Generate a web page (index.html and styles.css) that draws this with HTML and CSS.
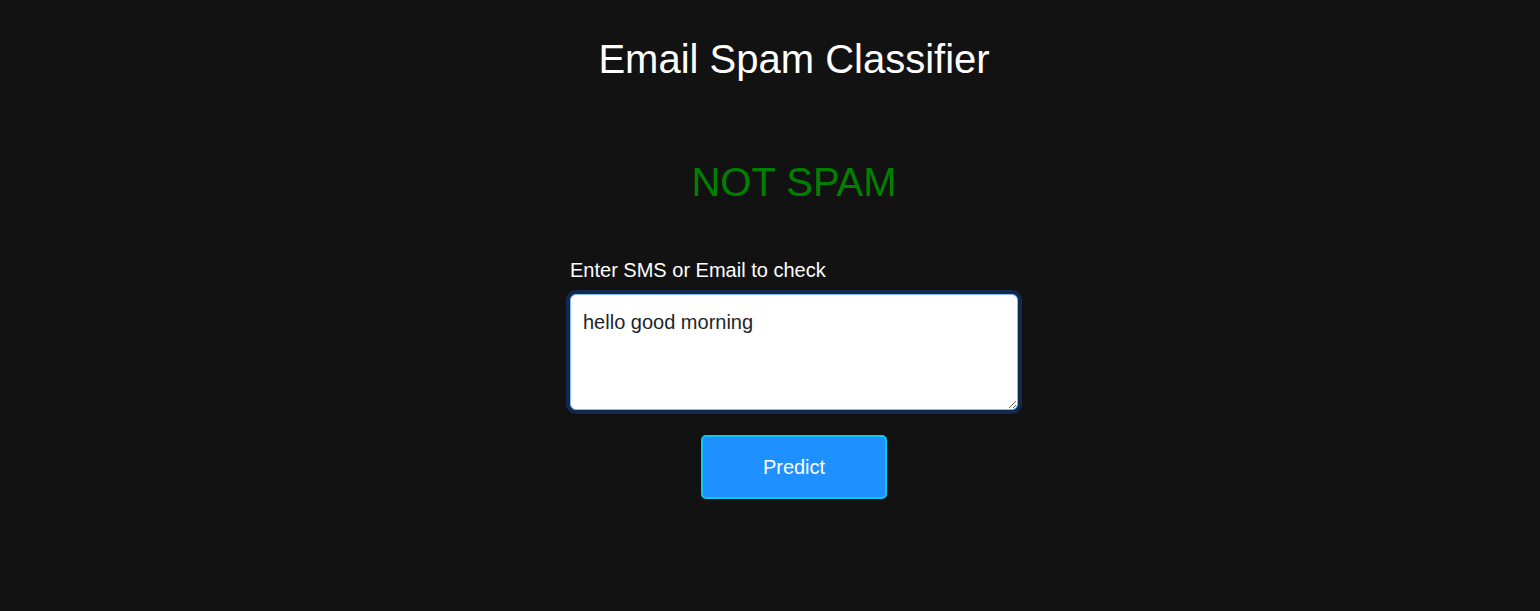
FILE: index.html
```html
<!DOCTYPE html>
<html lang="en">
<head>
<meta charset="utf-8">
<title>Email Spam Classifier</title>
<link rel="stylesheet" href="styles.css">
</head>
<body>
<main class="page">
  <h1 class="title">Email Spam Classifier</h1>
  <h2 class="result">NOT SPAM</h2>
  <form class="form">
    <label class="label" for="msg">Enter SMS or Email to check</label>
    <textarea id="msg" class="input" rows="3">hello good morning</textarea>
    <button type="button" class="btn">Predict</button>
  </form>
</main>
</body>
</html>
```
FILE: styles.css
```css
html, body {
  margin: 0;
  padding: 0;
  background: #121212;
}
body {
  font-family: "Liberation Sans", Arial, sans-serif;
  color: #ffffff;
}
.page {
  display: flex;
  flex-direction: column;
  align-items: center;
  padding-left: 48px;
}
.title {
  margin: 35px 0 0;
  font-size: 40px;
  line-height: 48px;
  font-weight: normal;
  color: #ffffff;
}
.result {
  margin: 75px 0 0;
  font-size: 40px;
  line-height: 48px;
  font-weight: normal;
  color: #008000;
}
.form {
  margin-top: 52px;
  width: 448px;
  display: flex;
  flex-direction: column;
  align-items: center;
}
.label {
  align-self: stretch;
  font-size: 20px;
  line-height: 24px;
  color: #ffffff;
}
.input {
  margin-top: 12px;
  box-sizing: border-box;
  width: 448px;
  height: 116px;
  padding: 12px;
  font-family: "Liberation Sans", Arial, sans-serif;
  font-size: 20px;
  line-height: 30px;
  color: #212529;
  background: #ffffff;
  border: 1px solid #86b7fe;
  border-radius: 6px;
  box-shadow: 0 0 0 4px #112a4d;
  outline: none;
  resize: vertical;
}
.btn {
  margin-top: 25px;
  box-sizing: border-box;
  width: 186px;
  height: 64px;
  font-family: "Liberation Sans", Arial, sans-serif;
  font-size: 20px;
  color: #ffffff;
  background: #1e90ff;
  border: 2px solid #0fc8f0;
  border-radius: 5px;
  cursor: pointer;
}
```
